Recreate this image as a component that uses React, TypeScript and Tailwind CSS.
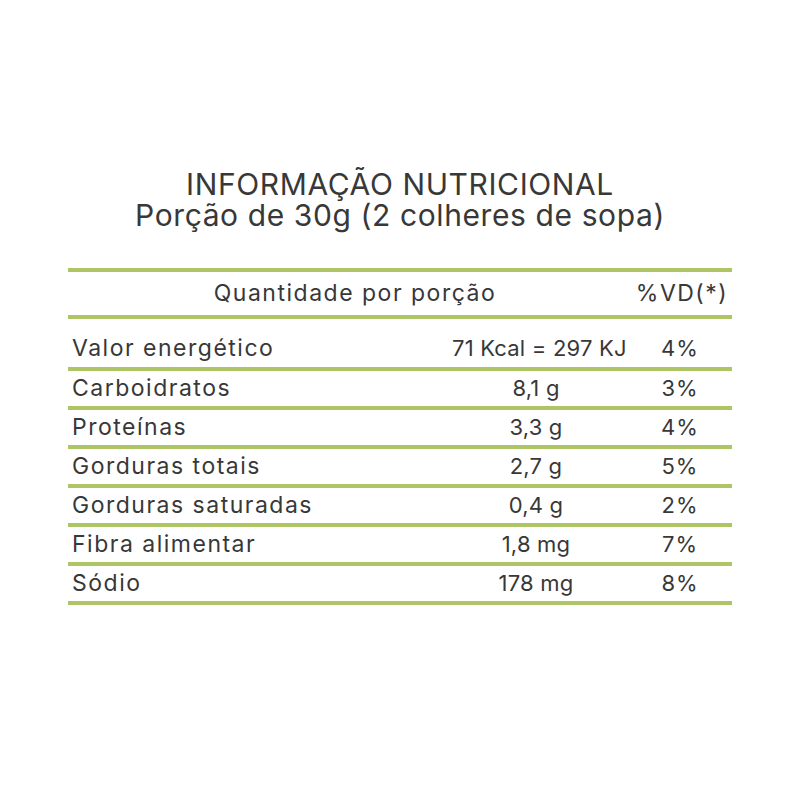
import React from 'react';

const rows = [
  { label: 'Carboidratos', value: '8,1 g', pct: '3%' },
  { label: 'Proteínas', value: '3,3 g', pct: '4%' },
  { label: 'Gorduras totais', value: '2,7 g', pct: '5%' },
  { label: 'Gorduras saturadas', value: '0,4 g', pct: '2%' },
  { label: 'Fibra alimentar', value: '1,8 mg', pct: '7%' },
  { label: 'Sódio', value: '178 mg', pct: '8%' },
];

function Row({ label, value, pct, first }: { label: string; value: string; pct: string; first?: boolean }) {
  return (
    <div
      className={
        'flex border-b-4 border-[#aec566] leading-[35px] ' + (first ? 'h-[52px] pt-[12px]' : 'h-[39px]')
      }
    >
      <div className="w-[384px] pl-[4px] text-[23px] tracking-[1.5px]">{label}</div>
      <div className="w-[168px] text-center whitespace-nowrap text-[22px] tracking-[0.2px]">{value}</div>
      <div className="w-[112px] text-center pl-[8px] text-[22px] tracking-[1px]">{pct}</div>
    </div>
  );
}

export default function App() {
  return (
    <div
      className="w-[800px] h-[800px] bg-white flex flex-col items-center text-[#383838]"
      style={{ fontFamily: 'Inter, "Open Sans", sans-serif' }}
    >
      <div className="mt-[169px] text-center text-[30px] leading-[31px] tracking-[0.6px]">
        <div>INFORMAÇÃO NUTRICIONAL</div>
        <div>Porção de 30g (2 colheres de sopa)</div>
      </div>

      <div className="mt-[37px] w-[664px]">
        <div className="flex h-[51px] border-y-4 border-[#aec566] pt-[4px] leading-[35px] text-[23px] tracking-[1.5px]">
          <div className="w-[552px] text-center pl-[22px]">Quantidade por porção</div>
          <div className="w-[112px] text-center pl-[12px]">%VD(*)</div>
        </div>
        <Row first label="Valor energético" value="71 Kcal = 297 KJ" pct="4%" />
        {rows.map((r) => (
          <Row key={r.label} {...r} />
        ))}
      </div>
    </div>
  );
}
